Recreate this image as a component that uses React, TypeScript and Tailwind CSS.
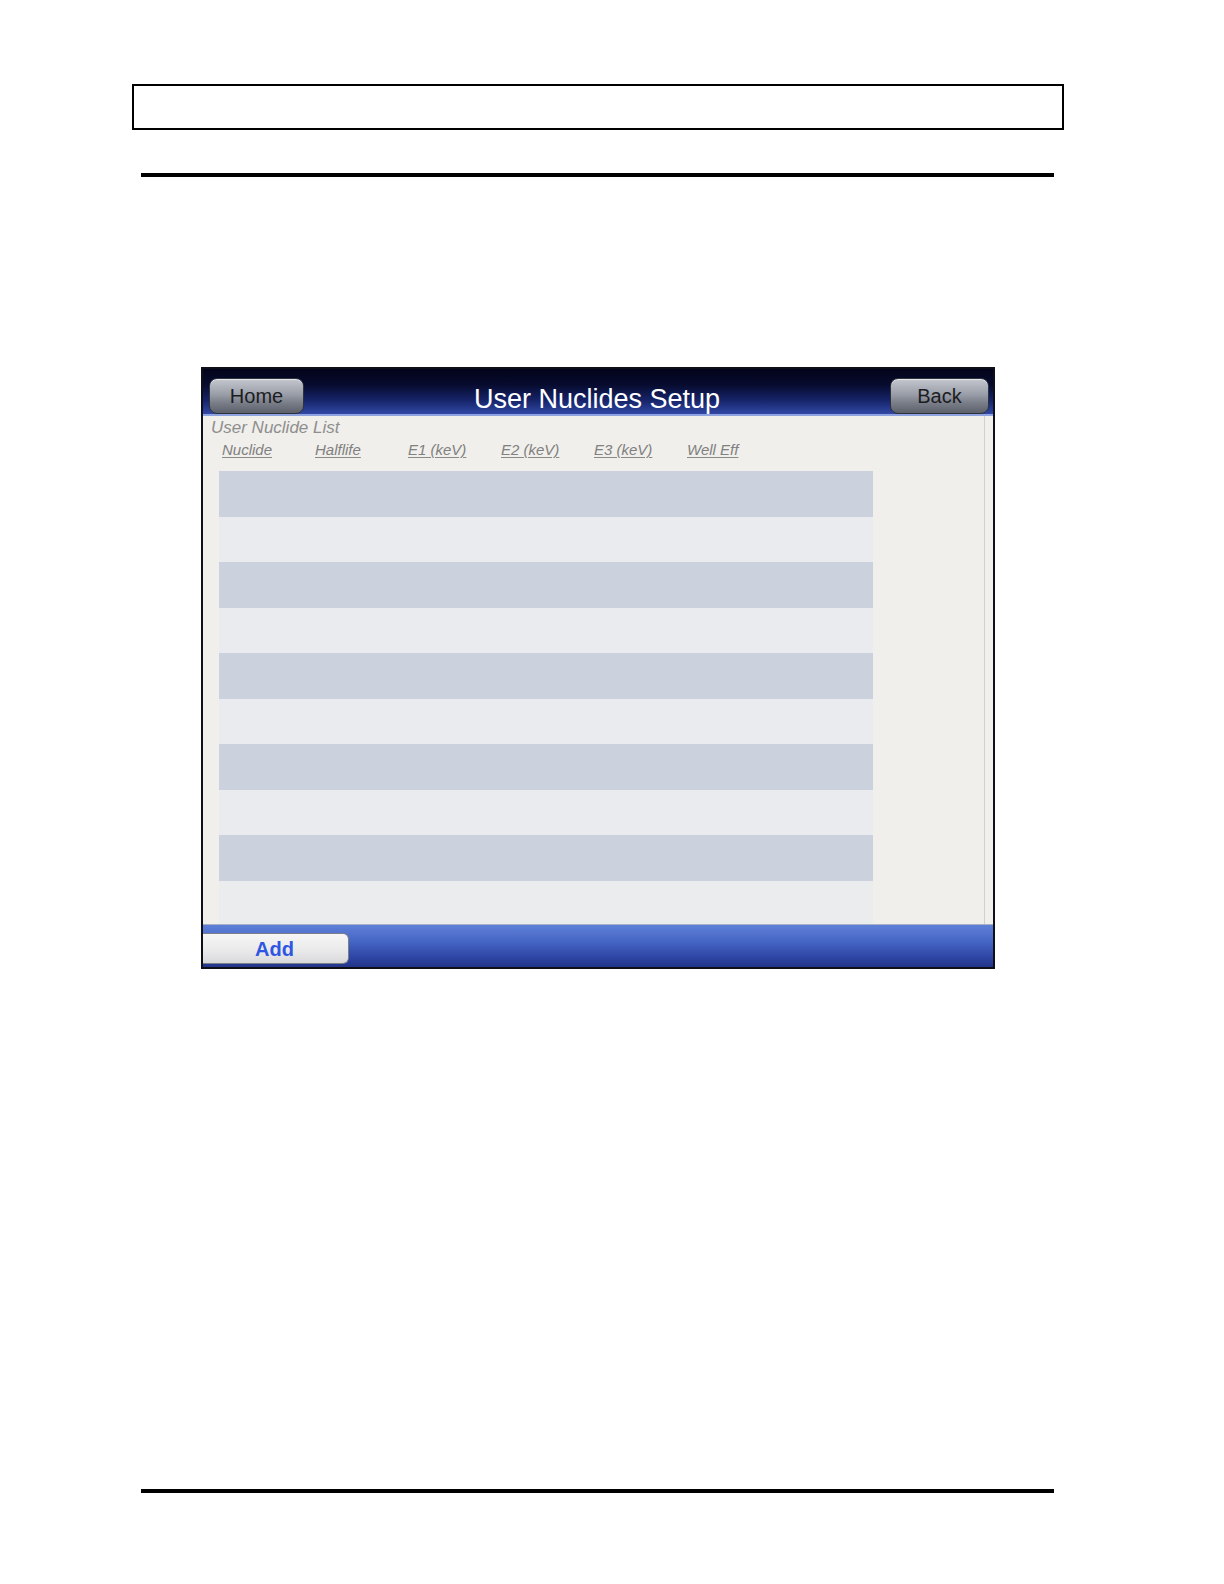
const COLUMNS = ['Nuclide', 'Halflife', 'E1 (keV)', 'E2 (keV)', 'E3 (keV)', 'Well Eff'];

const ROWS = Array.from({ length: 9 }, (_, i) => i);

function PanelButton({ label, width }: { label: string; width: string }) {
  return (
    <div
      className={`${width} flex h-[36px] items-center justify-center rounded-[8px] border border-[#2e313c] bg-[linear-gradient(to_bottom,#c4c7ce_0%,#9a9ea8_45%,#7a7e88_70%,#5c606a_100%)] text-[20px] leading-none text-[#1c1d22] shadow-[inset_0_1px_0_rgba(255,255,255,0.55)]`}
    >
      {label}
    </div>
  );
}

function NuclideScreen() {
  return (
    <div className="ml-[201px] mt-[190px] flex h-[602px] w-[794px] flex-col border-2 border-[#0e0f18] bg-[#0e0f18]">
      {/* header bar */}
      <div className="flex h-[47px] items-start border-b-2 border-[#8ea3df] bg-[linear-gradient(to_bottom,#03041a_0%,#070b2e_35%,#16246a_70%,#3148a6_100%)] pl-[6px] pr-[4px] pt-[9px]">
        <PanelButton label="Home" width="w-[95px]" />
        <div className="flex-1 pt-[8px] text-center text-[27px] leading-none text-white">
          User Nuclides Setup
        </div>
        <PanelButton label="Back" width="w-[99px]" />
      </div>

      {/* list area */}
      <div className="flex h-[508px] bg-[#f0efeb]">
        <div className="flex flex-1 flex-col">
          <div className="pl-[8px] pt-[3px] text-[17px] italic leading-[17px] text-[#8e8e8e]">
            User Nuclide List
          </div>
          <div className="mt-[6px] flex pl-[19px] text-[15px] italic leading-[15px] text-[#808080]">
            {COLUMNS.map((c) => (
              <div key={c} className="w-[93px]">
                <span className="underline decoration-[#8a8a8a] underline-offset-2">{c}</span>
              </div>
            ))}
          </div>
          <div className="ml-[16px] mt-[14px] flex w-[654px] flex-1 flex-col">
            {ROWS.map((i) => (
              <div
                key={i}
                className={i % 2 === 0 ? 'h-[45.5px] bg-[#cbd2dd]' : 'h-[45.5px] bg-[#e9ebef]'}
              />
            ))}
            <div className="flex-1 bg-[#ebecee]" />
          </div>
        </div>
        <div className="w-[9px] border-l border-[#d2d1cc] bg-[#f1f0ec]" />
      </div>

      {/* footer bar */}
      <div className="flex h-[43px] items-start border-t border-[#a7b0c4] bg-[linear-gradient(to_bottom,#5f80d8_0%,#4565c4_40%,#2f47a6_75%,#22348a_100%)] pt-[8px]">
        <div className="flex h-[31px] w-[146px] items-center rounded-r-[6px] border border-l-0 border-[#7b7f8a] bg-[linear-gradient(to_bottom,#f6f6f6_0%,#e9e9ea_60%,#d9d9dc_100%)] pl-[52px] text-[20px] font-bold leading-none text-[#2f56e2]">
          Add
        </div>
      </div>
    </div>
  );
}

export default function App() {
  return (
    <div className="h-[1584px] w-[1224px] bg-white font-['Liberation_Sans',Arial,sans-serif]">
      <div className="pt-[84px]">
        <div className="ml-[132px] h-[46px] w-[932px] border-2 border-black" />
        <div className="ml-[141px] mt-[43px] h-[4px] w-[913px] bg-black" />
        <NuclideScreen />
        <div className="ml-[141px] mt-[520px] h-[4px] w-[913px] bg-black" />
      </div>
    </div>
  );
}
